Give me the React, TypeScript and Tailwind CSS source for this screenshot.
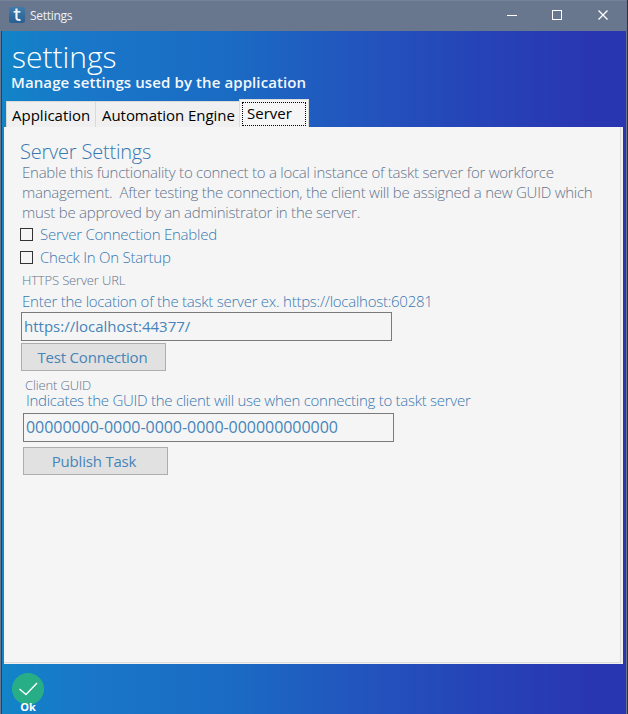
import React from "react";

const font = "font-['Segoe_UI','Open_Sans','Noto_Sans',sans-serif]";

function Line({ className, children }: { className: string; children: React.ReactNode }) {
  return <div className={`whitespace-pre ${className}`}>{children}</div>;
}

function AppIcon() {
  return (
    <svg className="ml-[9px] mt-[6px] h-4 w-4" viewBox="0 0 16 16">
      <defs>
        <linearGradient id="tile" x1="0" y1="0" x2="0" y2="1">
          <stop offset="0" stopColor="#3f7cab" />
          <stop offset="1" stopColor="#2a5f91" />
        </linearGradient>
      </defs>
      <rect width="16" height="16" rx="2" fill="url(#tile)" />
      <path d="M7.5 1.5v9.2q0 2.8 4 2.2" fill="none" stroke="#eef3f8" strokeWidth="2.2" />
      <path d="M4.6 4.8h6.8" stroke="#eef3f8" strokeWidth="1.7" />
    </svg>
  );
}

function TitleBar() {
  return (
    <header className="flex h-[31px] border-t border-[#748395] bg-[#68778d]">
      <AppIcon />
      <Line className="ml-[5px] flex-1 text-[12px] leading-[29px] tracking-[-0.3px] text-[#eef0f3]">Settings</Line>
      <svg className="-mr-[2px] h-[30px] w-[138px] shrink-0" viewBox="0 0 138 30" fill="none" stroke="#fff">
        <path d="M17 14.5h10" />
        <rect x="62.5" y="9.5" width="9" height="9" />
        <path d="M108.5 9.5l9 9M117.5 9.5l-9 9" strokeWidth="1.3" />
      </svg>
    </header>
  );
}

function Tabs() {
  return (
    <nav className="flex h-[28px] items-end pl-[6px] text-[15px] text-black">
      <div className="h-[26px] w-[90px] border border-b-0 border-[#d9d9d9] bg-[#f0f0f0] pl-[5px]">
        <Line className="leading-[26px]">Application</Line>
      </div>
      <div className="h-[26px] w-[143px] border-t border-[#d9d9d9] bg-[#f0f0f0] pl-[6px]">
        <Line className="leading-[26px] tracking-[-0.05px]">Automation Engine</Line>
      </div>
      <div className="h-[28px] w-[70px] border border-b-0 border-[#dcdcdc] bg-[#f5f5f5] pl-[2px] pt-[2px]">
        <div className="h-[24px] w-[64px] border border-dotted border-black pl-[4px]">
          <Line className="leading-[21px]">Server</Line>
        </div>
      </div>
    </nav>
  );
}

function CheckRow({ children }: { children: React.ReactNode }) {
  return (
    <label className="flex h-[23px] items-center pl-4">
      <span className="h-[13px] w-[13px] border border-[#333]" />
      <Line className="ml-[7px] leading-[23px] tracking-[-0.24px]">{children}</Line>
    </label>
  );
}

function Panel() {
  return (
    <main className="ml-[4px] h-[537px] w-[619px] border-b-2 border-r-2 border-[#f0f0f0] bg-[#f5f5f5] text-[15px] font-light text-[#3878b2]">
      <div className="h-[536px] border-b border-r border-[#dcdcdc]">
        <Line className="pl-[16px] pt-[12px] text-[20px] leading-[26px] tracking-[-0.2px]">Server Settings</Line>
        <div className="-mt-[3px] mb-[1px] pl-[18px] leading-[20px] text-[#64748c]">
          <Line className="tracking-[-0.25px]">Enable this functionality to connect to a local instance of taskt server for workforce</Line>
          <Line className="tracking-[-0.25px]">management.  After testing the connection, the client will be assigned a new GUID which</Line>
          <Line className="tracking-[-0.25px]">must be approved by an administrator in the server.</Line>
        </div>
        <CheckRow>Server Connection Enabled</CheckRow>
        <CheckRow>Check In On Startup</CheckRow>
        <Line className="pl-[18px] pt-[1px] text-[13px] leading-[20px] tracking-[-0.15px] text-[#64748c]">HTTPS Server URL</Line>
        <Line className="pl-[18px] leading-[22px] tracking-[-0.25px]">Enter the location of the taskt server ex. https://localhost:60281</Line>
        <div className="ml-[17px] h-[29px] w-[371px] border border-[#7a7a7a] pl-[2px] font-normal text-[#4684b9]">
          <Line className="leading-[27px]">https://localhost:44377/</Line>
        </div>
        <button className="ml-[17px] mt-[2px] block h-[28px] w-[145px] border border-[#adadad] bg-[#e1e1e1] font-normal text-[#4684b9]">
          <Line className="pr-[2px] leading-[27px] tracking-[-0.2px]">Test Connection</Line>
        </button>
        <Line className="pl-[21px] pt-[7px] text-[13px] leading-[14px] tracking-[-0.15px] text-[#64748c]">Client GUID</Line>
        <Line className="mb-[5px] pl-[22px] leading-[16px] tracking-[-0.27px]">Indicates the GUID the client will use when connecting to taskt server</Line>
        <div className="ml-[19px] h-[29px] w-[371px] border border-[#7a7a7a] pl-[2px] font-normal text-[#4684b9]">
          <Line className="text-[16px] leading-[27px] tracking-[-0.04px]">00000000-0000-0000-0000-000000000000</Line>
        </div>
        <button className="ml-[19px] mt-[5px] block h-[28px] w-[145px] border border-[#adadad] bg-[#e1e1e1] font-normal text-[#4684b9]">
          <Line className="pr-[3px] leading-[27px] tracking-[-0.2px]">Publish Task</Line>
        </button>
      </div>
    </main>
  );
}

export default function App() {
  return (
    <div className={`h-[714px] w-[628px] overflow-hidden bg-[#303236] ${font}`}>
      <div className="flex h-[714px] w-[627px] flex-col border-r border-[#68778d]">
        <TitleBar />
        <div className="h-[683px] bg-[linear-gradient(90deg,#68778d_0px,#68778d_1px,#2037b0_1px,#2037b0_2px,#1284c8_2px,#1976c8_90px,#1a6bc3_230px,#2256be_350px,#2546b8_460px,#2936b2_590px)]">
          <Line className="h-[41px] pl-[12px] pt-[6px] text-[30px] font-light leading-[40px] text-white">settings</Line>
          <Line className="h-[27px] pl-[11px] text-[15px] font-semibold leading-[21px] tracking-[0.1px] text-[#f4f8fc]">Manage settings used by the application</Line>
          <Tabs />
          <Panel />
          <footer className="flex h-[50px] items-start pl-[12px] pt-[9px]">
            <button className="flex w-8 flex-col items-center">
              <svg className="h-8 w-8" viewBox="0 0 32 32" fill="none">
                <circle cx="16" cy="16" r="16" fill="#27ae86" />
                <path d="M7.5 16l6.5 5.5L25 10" stroke="#fff" strokeWidth="1.4" />
              </svg>
              <Line className="-mt-[5px] text-[11px] font-bold leading-[14px] text-white">Ok</Line>
            </button>
          </footer>
        </div>
      </div>
    </div>
  );
}
